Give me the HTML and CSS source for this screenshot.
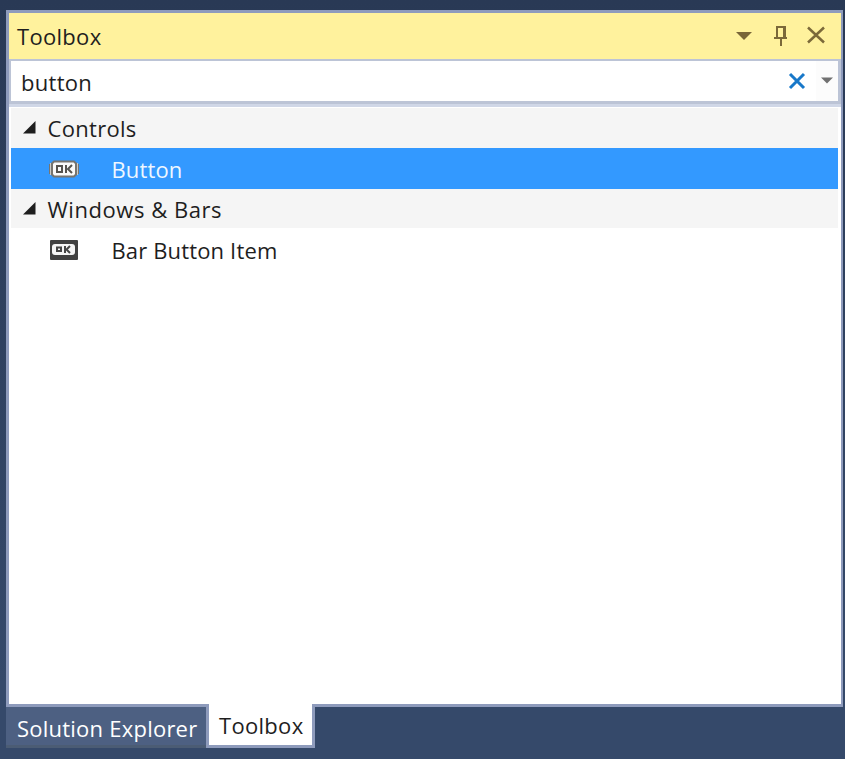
FILE: index.html
```html
<!DOCTYPE html>
<html lang="en">
<head>
<meta charset="utf-8">
<title>Toolbox</title>
<link rel="stylesheet" href="styles.css">
</head>
<body>
<main class="panel">
  <header class="titlebar">
    <span class="title">Toolbox</span>
    <svg class="window-icons" width="96" height="30" viewBox="0 0 96 30">
      <path fill="#796638" d="M4 9h16l-8 8z"/>
      <path fill="none" stroke="#7b6939" stroke-width="2" d="M45 15V4h8v11M42 15h13M49 15v8"/>
      <path fill="none" stroke="#7b6939" stroke-width="2" d="M52 4v11"/>
      <path fill="none" stroke="#7b6939" stroke-width="2.500" d="M76 4.500l16 15M92 4.500l-16 15"/>
    </svg>
  </header>
  <div class="search">
    <span class="query">button</span>
    <svg class="clear" width="18" height="18" viewBox="0 0 18 18"><path fill="none" stroke="#1878c9" stroke-width="3" d="M2 2l14 14M16 2L2 16"/></svg>
    <span class="dropdown"><svg width="13" height="7" viewBox="0 0 13 7"><path fill="#717171" d="M0 .5h12L6 6.500z"/></svg></span>
  </div>
  <div class="list">
    <div class="row group first">
      <svg class="arrow" width="13" height="13" viewBox="0 0 13 13"><path fill="#1e1e1e" d="M12.500 0v12.500H0z"/></svg>
      <span class="controls">Controls</span>
    </div>
    <div class="row item selected">
      <svg class="icon" width="32" height="22" viewBox="0 0 32 22">
        <path fill="#c9cac8" d="M2 5h28v12H2z"/>
        <path fill="#fafafa" stroke="#777570" stroke-width="2" d="M6 3.500h20l2 2v11l-2 2H6l-2-2v-11z"/>
        <path fill="none" stroke="#777570" d="M1.500 6v10M30.500 6v10"/>
        <path fill="none" stroke="#55534f" stroke-width="2" d="M9 8h5v6H9zM18 7v8M24 7l-4 4 4 4"/>
      </svg>
      <span class="button">Button</span>
    </div>
    <div class="row group">
      <svg class="arrow" width="13" height="13" viewBox="0 0 13 13"><path fill="#1e1e1e" d="M12.500 0v12.500H0z"/></svg>
      <span class="windows">Windows &amp; Bars</span>
    </div>
    <div class="row item last">
      <svg class="icon" width="32" height="22" viewBox="0 0 32 22">
        <rect x="2" y="1" width="28" height="20" rx="1" fill="#414141"/>
        <rect x="4" y="5" width="23" height="11" rx="3" fill="#f5f5f5"/>
        <path fill="none" stroke="#454545" stroke-width="2" d="M9 8.500h4v3.500H9zM17 7v7M22 7l-3.500 3.500L22 14"/>
      </svg>
      <span class="bar-button">Bar Button Item</span>
    </div>
  </div>
</main>
<nav class="tabs">
  <div class="tab"><span class="explorer">Solution Explorer</span></div>
  <div class="tab active"><span class="title">Toolbox</span></div>
</nav>
</body>
</html>
```
FILE: styles.css
```css
* { box-sizing: border-box; }
body {
  margin: 0;
  height: 759px;
  overflow: hidden;
  padding: 10px 2px 0 6px;
  background: linear-gradient(#293955, #35496a 90%);
  font: 22px/30px "Open Sans", "Noto Sans", sans-serif;
  color: #1e1e1e;
}
span { white-space: nowrap; }
.title, .query, .controls { letter-spacing: .3px; }
.button, .bar-button { letter-spacing: .15px; }
.explorer { letter-spacing: .23px; }
.windows { letter-spacing: .55px; }
.panel {
  height: 697px;
  border: 3px solid #8e9bbc;
  border-right-width: 2px;
  background: #fff;
}
.titlebar {
  height: 46px;
  display: flex;
  align-items: center;
  justify-content: space-between;
  padding: 0 13px 1px 8px;
  background: #fff29d;
}
.window-icons { margin-top: 4px; }
.search {
  height: 45px;
  display: flex;
  align-items: center;
  border: solid #bcc4d6;
  border-width: 2px 3px 3px 2px;
  padding-left: 10px;
}
.query { margin-top: 2px; }
.clear { margin: 0 10px 0 auto; }
.dropdown {
  display: flex;
  align-items: center;
  justify-content: center;
  width: 22px;
  height: 40px;
  padding-bottom: 2px;
  background: #fcfcfc;
}
.list {
  border-top: 3px solid #d0d7e7;
  padding: 1px 3px 0 2px;
}
.row { display: flex; align-items: center; }
.group {
  height: 39px;
  padding-left: 12px;
  gap: 12px;
  background: #f5f5f5;
}
.first { height: 40px; }
.arrow { margin-top: -1px; }
.item {
  height: 41px;
  padding: 0 0 0 37px;
  gap: 32px;
}
.selected { background: #3399ff; color: #eef7ff; }
.last { height: 44px; }
.last .icon { margin-top: -1px; }
.controls, .windows, .button, .bar-button { margin-left: -.5px; }
.tabs { display: flex; height: 44px; margin-top: -3px; position: relative; }
.tab {
  width: 200px;
  margin-top: 3px;
  padding: 6px 0 0 11px;
  height: 41px;
  background: #4d6082;
  border-bottom: 3px solid #4b5c74;
  color: #fff;
}
.active {
  width: 109px;
  height: 44px;
  margin-top: 0;
  padding-left: 10px;
  border: solid #8e9bbc;
  border-width: 0 3px 3px;
  background: #fff;
  color: #1e1e1e;
}
```
